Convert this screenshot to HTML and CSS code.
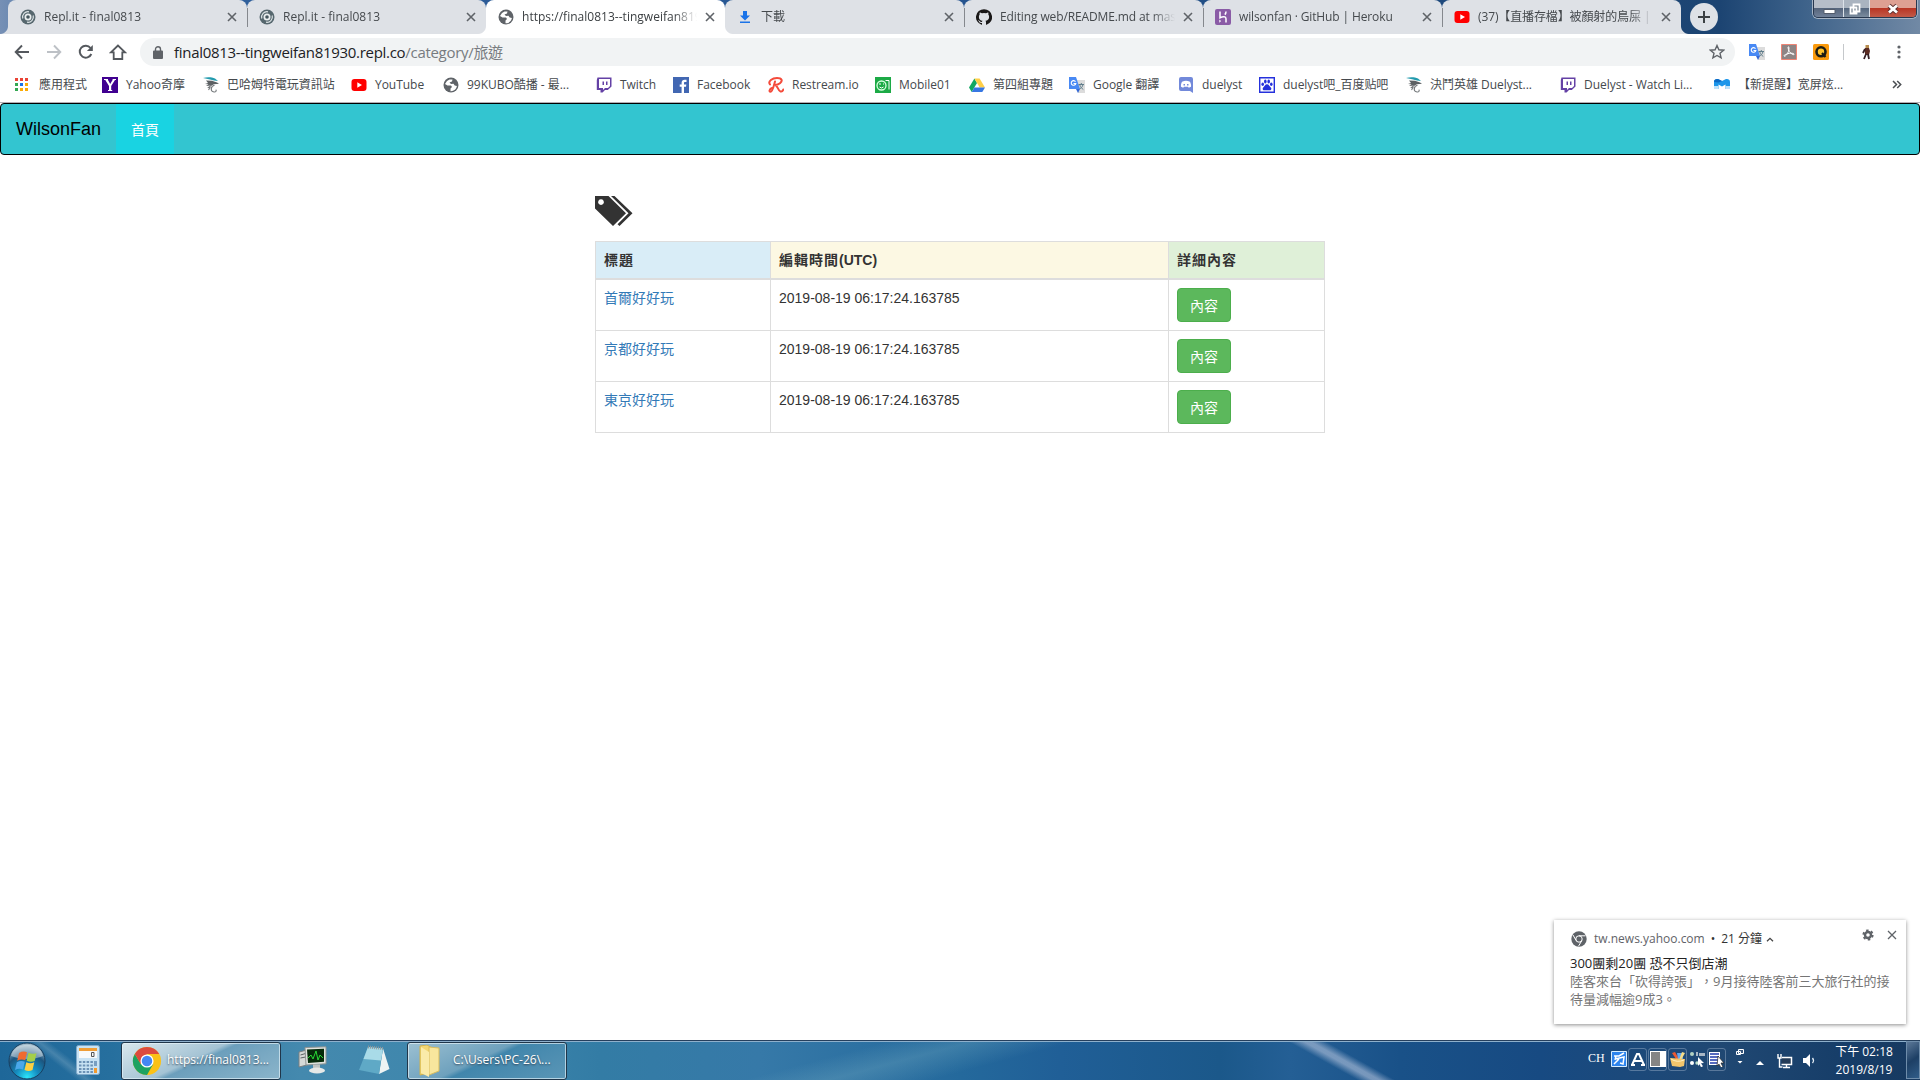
FILE: index.html
```html
<!DOCTYPE html>
<html lang="zh-TW">
<head>
<meta charset="utf-8">
<title>WilsonFan</title>
<link rel="stylesheet" href="styles.css">
</head>
<body>
<svg class="defs" width="0" height="0" aria-hidden="true">
  <symbol id="replit" viewBox="0 0 16 16"><circle cx="8" cy="8" r="7.500" fill="#56676e"/><path d="M2.800 9.500A5.400 5.400 0 0 1 9 2.800M13.200 6.500A5.400 5.400 0 0 1 7 13.200" fill="none" stroke="#dce3e5" stroke-width="1.200"/><circle cx="8" cy="8" r="3.500" fill="#e9edee"/><circle cx="8" cy="8" r="1.800" fill="#45565d"/></symbol>
  <symbol id="globe" viewBox="0 0 16 16"><circle cx="8" cy="8" r="7.500" fill="#5f6368"/><path d="M6.500 2.500L4 4 2 7l2.500 1.500L8 8.500l1 1.500-1.500 1.500v2.700c3 .3 6-2 6.400-5.200l-2.200-.4-1.200-1.800L8 7 6.500 5.500 9 4.500l.5-2z" fill="#fff"/></symbol>
  <symbol id="download" viewBox="0 0 16 16"><path d="M6 2h4v4.500h3L8 11.500 3 6.500h3zM3 12.500h10V14H3z" fill="#1a73e8"/></symbol>
  <symbol id="github" viewBox="0 0 16 16"><path d="M8 .2a8 8 0 0 0-2.500 15.600c.4.100.5-.2.500-.4v-1.500c-2.200.5-2.700-.9-2.700-.9-.4-.9-.9-1.200-.9-1.200-.7-.5.1-.5.100-.5.800.1 1.200.8 1.200.8.700 1.200 1.900.9 2.300.7.100-.5.300-.9.500-1.100-1.800-.2-3.600-.9-3.600-4 0-.9.300-1.600.8-2.100-.1-.2-.4-1 .1-2.100 0 0 .7-.2 2.200.8a7.600 7.600 0 0 1 4 0c1.500-1 2.200-.8 2.200-.8.400 1.100.1 1.900.1 2.100.5.600.8 1.300.8 2.100 0 3.100-1.900 3.800-3.700 4 .3.300.6.800.6 1.500v2.200c0 .2.100.5.600.4A8 8 0 0 0 8 .2z" fill="#191717"/></symbol>
  <symbol id="heroku" viewBox="0 0 16 16"><rect width="16" height="16" rx="2" fill="#8a5ba6"/><path d="M5 2.500v6.300c3-1.400 6-1.500 6 .9v3.800M11 2.500c0 1.300-.4 2.300-1.200 3.100" fill="none" stroke="#fff" stroke-width="1.500"/><path d="M4.300 10.500v3.200l1.800-1.600z" fill="#fff"/></symbol>
  <symbol id="youtube" viewBox="0 0 16 16"><rect x=".5" y="2" width="15" height="12" rx="3" fill="#f00"/><path d="M6.300 5.200v5.600L11 8z" fill="#fff"/></symbol>
  <symbol id="close" viewBox="0 0 10 10"><path d="M1 1l8 8M9 1L1 9" stroke="currentColor" stroke-width="1.600"/></symbol>
  <symbol id="apps" viewBox="0 0 16 16"><path d="M0 1h3v3H0zM5 1h3v3H5zM10 1h3v3h-3z" fill="#ea4335"/><path d="M0 6h3v3H0zM0 11h3v3H0z" fill="#34a853"/><path d="M5 6h3v3H5z" fill="#1a73e8"/><path d="M10 6h3v3h-3zM5 11h3v3H5zM10 11h3v3h-3z" fill="#fbab05"/></symbol>
  <symbol id="yahoo" viewBox="0 0 16 16"><path fill="#400090" d="M0 0h16v16H0z"/><path d="M2 2h4v1L8.200 7l2.400-4V2H14v1h-1L9.200 9v4h1v1H6v-1h1V9L3.300 3H2z" fill="#fff"/></symbol>
  <symbol id="bird" viewBox="0 0 16 16"><path d="M0 1C5-.3 9 .3 12 1.500l3 2.500-4-.5-5-1.200z" fill="#239bae"/><path d="M3 3.500l6 .3 5 1.700 2 1.300-5 .4-2.500 1.300L3 9l2.500-1.700L2 7l3-1z" fill="#5c6063"/><path d="M11.500 8.300c-4 1-4.500 6.200-.5 6.700 2 .2 2.800-1.500 1.700-2.200M8.500 8l-3 2.500 1.500.2-1.500 2.300" fill="none" stroke="#74787b" stroke-width="1.100"/></symbol>
  <symbol id="twitch" viewBox="0 0 16 16"><path d="M1.500.5h14v9L11.800 13H9l-2.500 2.500H4.500V13H.800V3z" fill="#6441a5"/><path d="M3 2h11v7l-2 2H9l-2 2v-2H3z" fill="#fff"/><path d="M6.500 4.500H8V8H6.500zM10 4.500h1.500V8H10z" fill="#6441a5"/></symbol>
  <symbol id="facebook" viewBox="0 0 16 16"><path fill="#4267b2" d="M0 0h16v16H0z"/><path d="M8.600 16V9.800H6.700V7.500h1.900V5.800c0-2 1.200-3.100 3-3.100.9 0 1.700.1 1.900.1V5h-1.300c-1 0-1.200.5-1.200 1.200v1.300h2.300l-.3 2.300h-2V16z" fill="#fff"/></symbol>
  <symbol id="restream" viewBox="0 0 16 16"><path d="M7 4.500C6 8 4.500 14.800 2.500 14.800c-1.800 0-1-3 1.500-3.800M2 7.500C-.5 4 4.500 1 9 1c5 0 6 2.800 3 5.200C10.500 7.400 8 7.900 7 7.900c2.500 0 3 6 5.500 6.600 1.500.3 2.500-.7 2.800-2" fill="none" stroke="#f44b3b" stroke-width="2" stroke-linecap="round"/></symbol>
  <symbol id="mobile" viewBox="0 0 16 16"><path fill="#1caa46" d="M0 0h16v16H0z"/><circle cx="6.500" cy="8.500" r="4.500" fill="none" stroke="#d7ffdf" stroke-width="1.300"/><path d="M4 7h2M8 7h1M4.500 10l2 1 2-1M10.500 3.500H14v9" fill="none" stroke="#fff"/></symbol>
  <symbol id="drive" viewBox="0 0 16 16"><path d="M5.400 1.500L0 10.500 2.700 15 8 6z" fill="#11a861"/><path d="M5.400 1.500h5.200l5.400 9h-5.300z" fill="#ffcf48"/><path d="M5.300 10.500H16L13.300 15H2.700z" fill="#3777e3"/></symbol>
  <symbol id="translate" viewBox="0 0 16 16"><path d="M6 3h10v13H9z" fill="#dcdcdc"/><path d="M0 0h7l4 12H0z" fill="#4889f4"/><path d="M7 12h4l-2 4z" fill="#3367d6"/><path d="M6.500 4.700A2.300 2.300 0 1 0 6.800 6.500H4.500" fill="none" stroke="#fff" stroke-width="1.100"/><path d="M9.500 7.500H15M12.300 6v1.500M14 7.500c-.5 2.500-2 4-3.500 4.500M10.800 8c.5 2 2 3.500 3.500 4.500" fill="none" stroke="#607d8b"/></symbol>
  <symbol id="discord" viewBox="0 0 16 16"><path d="M3 0h10a2 2 0 0 1 2 2v14l-3-2H3a2 2 0 0 1-2-2V2a2 2 0 0 1 2-2z" fill="#7289da"/><path d="M4 4.800c3-1.300 5-1.300 8 0 1 2 1.300 3.500 1 5l-2.200 1-.8-1H6l-.8 1L3 9.800c-.2-1.700.1-3.200 1-5z" fill="#fff"/><path d="M5.500 7h1.500v1.500H5.500zM9 7h1.500v1.500H9z" fill="#7289da"/></symbol>
  <symbol id="baidu" viewBox="0 0 16 16"><path fill="#fff" stroke="#2531dc" stroke-width="1.400" d="M.7.700h14.600v14.600H.7z"/><g fill="#2531dc"><ellipse cx="3.700" cy="7.300" rx="1.300" ry="1.800"/><ellipse cx="6.300" cy="4.500" rx="1.300" ry="1.900"/><ellipse cx="9.700" cy="4.500" rx="1.300" ry="1.900"/><ellipse cx="12.300" cy="7.300" rx="1.300" ry="1.800"/><path d="M8 7.200c2 0 2.300 2 4 3.500 1 1.500-.2 3-2 2.600H6c-1.800.4-3-1.100-2-2.600C5.700 9.200 6 7.200 8 7.200z"/></g></symbol>
  <symbol id="mm" viewBox="0 0 16 16"><path d="M0 5c0-3 3-3.500 5-2.500L8 4l3-1.500C13 1.500 16 2 16 5v7h-4.500V7.500L8 9.500l-3.500-2V12H0z" fill="#1c96ea"/><path d="M0 5c0-3 3-3.500 5-2.500L8 4 4.500 5.500z" fill="#0d69c4"/><path d="M0 9h4.500v3H0zM11.500 9H16v3h-4.500z" fill="#bfe2fa"/></symbol>
  <symbol id="chrome" viewBox="0 0 32 32"><circle cx="16" cy="16" r="15" fill="#fbc116"/><path d="M3 8.500A15 15 0 0 0 16 31l6.500-11.500L16 16 9.500 19.500z" fill="#1da261"/><path d="M3 8.500A15 15 0 0 1 29 8.500H16L9.500 19.500z" fill="#dd4b3e"/><circle cx="16" cy="16" r="7" fill="#fff"/><circle cx="16" cy="16" r="5.600" fill="#4587f3"/></symbol>
</svg>

<header class="browser">
  <div class="tabstrip">
    <div class="tab first"><svg class="ico"><use href="#replit"/></svg><span class="tab-title wide">Repl.it - final0813</span><svg class="x"><use href="#close"/></svg></div>
    <div class="tab before-active"><svg class="ico"><use href="#replit"/></svg><span class="tab-title wide">Repl.it - final0813</span><svg class="x"><use href="#close"/></svg></div>
    <div class="tab active"><svg class="ico"><use href="#globe"/></svg><span class="tab-title wide">https://final0813--tingweifan81930.repl.co</span><svg class="x"><use href="#close"/></svg></div>
    <div class="tab after-active"><svg class="ico"><use href="#download"/></svg><span class="tab-title">下載</span><svg class="x"><use href="#close"/></svg></div>
    <div class="tab"><svg class="ico"><use href="#github"/></svg><span class="tab-title">Editing web/README.md at master</span><svg class="x"><use href="#close"/></svg></div>
    <div class="tab"><svg class="ico"><use href="#heroku"/></svg><span class="tab-title">wilsonfan · GitHub | Heroku</span><svg class="x"><use href="#close"/></svg></div>
    <div class="tab last"><svg class="ico"><use href="#youtube"/></svg><span class="tab-title">(37)【直播存檔】被顏射的鳥屎 |</span><svg class="x"><use href="#close"/></svg></div>
    <div class="newtab"><svg width="14" height="14" viewBox="0 0 14 14"><path d="M7 1v12M1 7h12" stroke="#3c4043" stroke-width="2"/></svg></div>
    <div class="winctl">
      <span class="min"><svg width="14" height="14"><path d="M2 7.500h11v4H2z" fill="#fff" stroke="#535c6c"/></svg></span>
      <span class="max"><svg width="14" height="14"><path d="M5.500 2.500h6v7h-6zM2.500 5.500h6v6h-6z" fill="#76828f" stroke="#fff" stroke-width="1.800"/></svg></span>
      <span class="cls"><svg width="14" height="14"><path d="M3 3.500l8 7M11 3.500l-8 7" stroke="#5b3030" stroke-width="4.500"/><path d="M3 3.500l8 7M11 3.500l-8 7" stroke="#fff" stroke-width="2.800"/></svg></span>
    </div>
  </div>

  <div class="toolbar">
    <div class="nav-icons">
      <svg width="16" height="16" viewBox="0 0 16 16"><path d="M15 8H2M8 1.500L1.700 8 8 14.500" fill="none" stroke="#54585d" stroke-width="1.900"/></svg>
      <svg width="16" height="16" viewBox="0 0 16 16"><path d="M1 8h13M8 1.500L14.300 8 8 14.500" fill="none" stroke="#bdc1c6" stroke-width="1.900"/></svg>
      <svg width="16" height="16" viewBox="0 0 16 16"><path d="M13.300 10A6 6 0 1 1 12.500 4" fill="none" stroke="#54585d" stroke-width="2"/><path d="M14.800 1v6H8.900z" fill="#54585d"/></svg>
      <svg class="house" width="18" height="16" viewBox="0 0 18 16"><path d="M9 1.500L2 8.300h2.700V15h8.600V8.300H16z" fill="none" stroke="#54585d" stroke-width="1.800"/></svg>
    </div>
    <div class="omnibox">
      <svg width="10" height="13" viewBox="0 0 10 13"><path d="M1 4.500h8a1 1 0 0 1 1 1V12a1 1 0 0 1-1 1H1a1 1 0 0 1-1-1V5.500a1 1 0 0 1 1-1z" fill="#5f6368"/><path d="M2.500 5V3.200a2.500 2.500 0 0 1 5 0V5" fill="none" stroke="#5f6368" stroke-width="1.400"/></svg>
      <span class="url">final0813--tingweifan81930.repl.co<span class="path">/category/旅遊</span></span>
      <svg width="16" height="16" viewBox="0 0 16 16"><path d="M8 1.500l1.900 4.300 4.700.4-3.600 3.100 1.100 4.600L8 11.500l-4.100 2.400L5 9.300 1.400 6.200l4.700-.4z" fill="none" stroke="#5f6368" stroke-width="1.400"/></svg>
    </div>
    <div class="exts">
      <svg class="ico"><use href="#translate"/></svg>
      <svg class="ico" viewBox="0 0 16 16"><path d="M.5.500h15v15H.5z" fill="#8e8585" stroke="#ee8474"/><path d="M7.500 2.500c1 1 .3 5-1 7-1 1.800-3 3.500-3.500 2.500s4-3 7.500-2.800 3 2 1.500 1.300C9 9.500 7 6 7 3" fill="none" stroke="#fff"/></svg>
      <svg class="ico" viewBox="0 0 16 16"><rect width="16" height="16" rx="1.500" fill="#fa9a0c"/><circle cx="8" cy="7.800" r="4.500" fill="#ffc22b" stroke="#1c1c14" stroke-width="2.600"/><path d="M9 9l3.500 4" stroke="#1c1c14" stroke-width="2.200"/></svg>
      <i class="sep"></i>
      <svg class="ico fig" viewBox="0 0 16 16"><path d="M7.500 1h3.500v3.500H7.500z" fill="#b68b4d"/><path d="M7 4h4l1 3-1 4H7z" fill="#5b2b22"/><path d="M7 5L5 9M8 10l-2 5M10 10l1 5" stroke="#352025" stroke-width="1.800"/></svg>
      <svg width="4" height="14"><circle cx="2" cy="2" r="1.600" fill="#5f6368"/><circle cx="2" cy="7" r="1.600" fill="#5f6368"/><circle cx="2" cy="12" r="1.600" fill="#5f6368"/></svg>
    </div>
  </div>

  <nav class="bookmarks">
    <a><svg class="ico"><use href="#apps"/></svg>應用程式</a>
    <a><svg class="ico"><use href="#yahoo"/></svg>Yahoo奇摩</a>
    <a><svg class="ico"><use href="#bird"/></svg>巴哈姆特電玩資訊站</a>
    <a><svg class="ico"><use href="#youtube"/></svg>YouTube</a>
    <a><svg class="ico"><use href="#globe"/></svg>99KUBO酷播 - 最...</a>
    <a><svg class="ico"><use href="#twitch"/></svg>Twitch</a>
    <a><svg class="ico"><use href="#facebook"/></svg>Facebook</a>
    <a><svg class="ico"><use href="#restream"/></svg>Restream.io</a>
    <a><svg class="ico"><use href="#mobile"/></svg>Mobile01</a>
    <a><svg class="ico"><use href="#drive"/></svg>第四組專題</a>
    <a><svg class="ico"><use href="#translate"/></svg>Google 翻譯</a>
    <a><svg class="ico"><use href="#discord"/></svg>duelyst</a>
    <a><svg class="ico"><use href="#baidu"/></svg>duelyst吧_百度贴吧</a>
    <a><svg class="ico"><use href="#bird"/></svg>決鬥英雄 Duelyst...</a>
    <a><svg class="ico"><use href="#twitch"/></svg>Duelyst - Watch Li...</a>
    <a><svg class="ico"><use href="#mm"/></svg>【新提醒】宽屏炫...</a>
    <svg width="10" height="9" viewBox="0 0 10 9"><path d="M1 1l3.500 3.500L1 8M5.200 1l3.500 3.500L5.200 8" fill="none" stroke="#4a4e52" stroke-width="1.500"/></svg>
  </nav>
</header>

<main class="page">
  <nav class="navbar"><a class="brand">WilsonFan</a><a class="home">首頁</a></nav>
  <section class="content">
    <svg class="tags" width="38" height="30" viewBox="0 0 38 30"><path fill-rule="evenodd" d="M0 0h13.500L31 17.200 18 30 0 12.500zM6 3.200a2.900 2.900 0 1 0 .01 0z" fill="#333"/><path d="M16 0h3.500L37.500 17.200 24.500 30l-2-1.800L33.500 17.200z" fill="#333"/></svg>
    <table class="posts">
      <thead><tr><th class="info"><span>標題</span></th><th class="warning"><span>編輯時間</span>(UTC)</th><th class="success"><span>詳細內容</span></th></tr></thead>
      <tbody>
        <tr><td><a>首爾好好玩</a></td><td>2019-08-19 06:17:24.163785</td><td><button class="btn">內容</button></td></tr>
        <tr><td><a>京都好好玩</a></td><td>2019-08-19 06:17:24.163785</td><td><button class="btn">內容</button></td></tr>
        <tr><td><a>東京好好玩</a></td><td>2019-08-19 06:17:24.163785</td><td><button class="btn">內容</button></td></tr>
      </tbody>
    </table>
  </section>
</main>

<aside class="toast">
  <div class="toast-head">
    <svg width="16" height="16" viewBox="0 0 16 16"><circle cx="8" cy="8" r="7.700" fill="#5f6368"/><circle cx="8" cy="8" r="3.200" fill="none" stroke="#fff"/><path d="M8 4.800h6.500M5.200 9.600L2 4M10.800 9.600L7.500 15.200" stroke="#fff"/></svg>
    <span class="origin">tw.news.yahoo.com</span><span class="dot">•</span><span class="ago">21 分鐘</span>
    <svg class="chev" width="8" height="5" viewBox="0 0 8 5"><path d="M1 4.300l3-3 3 3" fill="none" stroke="#444" stroke-width="1.300"/></svg>
    <svg class="gear" width="12" height="12" viewBox="0 0 12 12"><circle cx="6" cy="6" r="3" fill="none" stroke="#5f6368" stroke-width="2.400"/><circle cx="6" cy="6" r="4.700" fill="none" stroke="#5f6368" stroke-width="1.800" stroke-dasharray="2.460 2.460"/></svg>
    <svg class="dismiss" width="10" height="10" viewBox="0 0 10 10"><path d="M1 1l8 8M9 1L1 9" stroke="#5f6368" stroke-width="1.300"/></svg>
  </div>
  <div class="toast-title">300團剩20團 恐不只倒店潮</div>
  <div class="toast-body">陸客來台「砍得誇張」，9月接待陸客前三大旅行社的接<br>待量減幅逾9成3。</div>
</aside>

<footer class="taskbar">
  <svg class="orb" width="38" height="38" viewBox="0 0 38 38"><defs><radialGradient id="og" cx=".5" cy=".95" r=".9"><stop offset="0" stop-color="#2ce6fb"/><stop offset=".35" stop-color="#158dc0"/><stop offset=".7" stop-color="#1c557f"/><stop offset="1" stop-color="#9fb9c9"/></radialGradient></defs><circle cx="19" cy="19" r="18" fill="url(#og)" stroke="#183f60"/><path d="M3 14C6-1 32-1 35 14c-9 4-22 4-32 0z" fill="#fff" opacity=".4"/><path d="M11 11q4-2.500 8-.8l-1.800 8q-4-1.700-8 .5z" fill="#ef6a31"/><path d="M20.500 10.800q4 2 8 .1l-1.800 8q-4 1.700-8-.2z" fill="#a4cf4a"/><path d="M8.800 20.200q4-2.200 8-.5L15 27.500q-4-1.700-8 .5z" fill="#4aa8ea"/><path d="M18.300 20.300q4 1.900 8 0l-1.800 7.800q-4 2-8-.1z" fill="#fbd042"/></svg>
  <svg class="calc" width="24" height="30" viewBox="0 0 24 30"><rect x=".5" y=".5" width="23" height="29" rx="2" fill="#c8e2f3" stroke="#7fa9ca"/><path d="M3 3h18v3H3z" fill="#ef9d36"/><path d="M3 6h18v7H3z" fill="#f7f9fa"/><path d="M15.500 7.500h2.500v4h-2.500z" fill="none" stroke="#555"/><path d="M3 17h15M3 20.500h15M3 24h15M3 27h15" stroke="#6c92b6" stroke-width="2" stroke-dasharray="2.500 1.300"/><path d="M18 16h3v5h-3z" fill="#799fc2"/><path d="M18 23h3v5h-3z" fill="#f39a2e"/></svg>
  <div class="task current"><svg width="30" height="30"><use href="#chrome"/></svg><span>https://final0813...</span></div>
  <svg class="monitor" width="30" height="28" viewBox="0 0 30 28"><path d="M1 6l8-2v15l-8 2z" fill="#d5d9d7" stroke="#797f80"/><path d="M2.500 9l5-1.500M2.500 12l5-1" stroke="#5a6264"/><path d="M7 1.500L28 .8v17L8 19z" fill="#e0e3df" stroke="#8d9392"/><path d="M9 3.500l17-.7v13L10 17z" fill="#062b0b"/><path d="M10 12l3-3 2 4 3-8 2 9 2-5 3 3" fill="none" stroke="#27d934"/><path d="M15 18.500h7v4h-7z" fill="#bec3c2"/><ellipse cx="19" cy="24.500" rx="8" ry="3" fill="#e6e8e7"/></svg>
  <svg class="notepad" width="31" height="30" viewBox="0 0 31 30"><path d="M24 3.500L30.500 24 20 29z" fill="#edf3f3"/><path d="M9 2l15 1.500L20 29 0 25z" fill="#5fa9c6"/><path d="M9 2l15 1.500-2 12L4.500 14z" fill="#a9dbe8"/><path d="M9 2l15 1.500" stroke="#8d9a9e" stroke-width="3" stroke-dasharray="1 1"/></svg>
  <div class="task folder"><svg width="30" height="32" viewBox="0 0 30 32"><path d="M4 1l7-1 5 3v24L4 30z" fill="#f1d673" stroke="#d2b34d"/><path d="M13 2l10 1v23l-10 4z" fill="#f8e69d" stroke="#d8bc5f"/><path d="M5 2l8 5v25l-8-4z" fill="#faeba9"/></svg><span>C:\Users\PC-26\...</span></div>

  <div class="tray">
    <span class="ch">CH</span>
    <svg width="16" height="16" viewBox="0 0 16 16"><path fill="#2d84ed" stroke="#d9efff" d="M.5.500h15v15H.5z"/><path d="M3 5h5l5-3M4 8l9-2-1 7-3-1M5 5L4 9M8 8l-5 5" fill="none" stroke="#fff" stroke-width="1.500"/></svg>
    <span class="key"><svg width="16" height="16"><path d="M2 14L7 3h2l5 11M4.500 10h7M1 14h4M11 14h4" fill="none" stroke="#fff" stroke-width="2"/></svg></span>
    <span class="key"><svg width="16" height="16"><path fill="#fff" d="M0 0h16v16H0z"/><path fill="#858585" d="M1 1h9v14H1z"/></svg></span>
    <span class="key"><svg width="16" height="16"><path d="M2 2l3-1 4 7H6z" fill="#ec5a32"/><path d="M7 2h6v6H8z" fill="#62a8ef"/><path d="M12 1l3 1-4 7H9z" fill="#f6dc86"/><path d="M0 7l15 1-1 7-4 1-8-1z" fill="#f3c66c"/><path d="M1 8q6 4 13 1" fill="none" stroke="#fff3c5"/></svg></span>
    <svg class="pad" width="16" height="16"><circle cx="3" cy="3" r="2" fill="#b4d2c2"/><circle cx="3" cy="12" r="2" fill="#fff"/><circle cx="8" cy="12" r="1.700" fill="#bde0ca"/><path d="M7 1h2v4H7zM10 2h6v3h-6z" fill="#a9b7c5"/><path d="M9 6l6 6-3 .2 2 3-2 1-1.500-3L9 15z" fill="#fff"/></svg>
    <span class="key"><svg width="16" height="16"><path fill="#fff" d="M0 1h11v13H0z"/><path d="M1 3h9M1 6h9M1 9h9M1 12h9" stroke="#1f3bab" stroke-width="1.500"/><path d="M9 5l6 7h-3l2 4-2 1-2-4-2 2z" fill="#fff" stroke="#222" stroke-width=".7"/></svg></span>
    <svg class="restore" width="10" height="18"><path d="M3.500 1.500h5v4h-5zM1.500 3.500h4v3h-4z" fill="#38567c" stroke="#fff"/><path d="M2.500 13h5L5 15.500z" fill="#fff"/></svg>
    <svg class="up" width="8" height="5"><path d="M0 5l4-4 4 4z" fill="#fff"/></svg>
    <svg class="net" width="16" height="16"><path d="M5 4.500h9.500v7H4.500" fill="#253c58" stroke="#fff" stroke-width="1.500"/><path d="M1 1v4h3V1M2.500 5v9h3M9.500 12v3M6 14.500h7" fill="none" stroke="#fff" stroke-width="1.400"/></svg>
    <svg class="vol" width="14" height="16"><path d="M0 5h3l4-4v13l-4-4H0z" fill="#fff"/><path d="M9.500 5q2 2.500 0 5" fill="none" stroke="#e3edf6" stroke-width="1.300"/></svg>
    <div class="clock">下午 02:18<br>2019/8/19</div>
    <i class="peek"></i>
  </div>
</footer>
</body>
</html>
```

FILE: styles.css
```css
* { box-sizing: border-box; }

body {
  margin: 0;
  width: 1920px;
  height: 1080px;
  overflow: hidden;
  display: flex;
  flex-direction: column;
  background: #fff;
  font-family: "Liberation Sans", "Noto Sans CJK TC", sans-serif;
  font-size: 14px;
  line-height: 20px;
  color: #333;
  text-spacing-trim: space-all;
}

svg { display: block; flex: none; }
.defs { position: absolute; }
.ico { width: 16px; height: 16px; }

.browser,
.toast,
.taskbar { font-family: "Open Sans", "Noto Sans CJK TC", sans-serif; }

/* Tab strip */
.tabstrip {
  display: flex;
  height: 34px;
  padding-left: 8px;
  background: linear-gradient(90deg, #7690b5 0, #6585b0 20px, #2f5f9b 240px, #265591 900px, #1f4a7e 1400px, #1c4472 1720px, #3c6189 1800px, #7189a5 1920px);
}
.tab {
  position: relative;
  display: flex;
  align-items: center;
  width: 239px;
  height: 34px;
  padding: 0 10px 0 12px;
  border-radius: 8px 8px 0 0;
  background: #dee1e6;
  color: #45494d;
  font-size: 12px;
  letter-spacing: -.12px;
}
.tab + .tab:not(.active):not(.after-active)::before {
  content: "";
  position: absolute;
  left: 0;
  top: 8px;
  width: 1px;
  height: 19px;
  background: #85888d;
}
.tab.active { background: #fff; color: #3c4043; }
.before-active { background: radial-gradient(circle at 0 0, #dee1e6 7.500px, #fff 8.500px) right bottom / 8px 8px no-repeat, #dee1e6; }
.after-active { background: radial-gradient(circle at 100% 0, #dee1e6 7.500px, #fff 8.500px) left bottom / 8px 8px no-repeat, #dee1e6; }
/* outward feet at both ends of the strip */
.first::after,
.last::after {
  content: "";
  position: absolute;
  bottom: 0;
  width: 8px;
  height: 8px;
}
.first::after { left: -8px; background: radial-gradient(circle at 0 0, transparent 7.500px, #dee1e6 8.500px); }
.last::after { right: -8px; background: radial-gradient(circle at 100% 0, transparent 7.500px, #dee1e6 8.500px); }
.tab-title {
  width: 175px;
  margin-left: 8px;
  overflow: hidden;
  white-space: nowrap;
  -webkit-mask-image: linear-gradient(90deg, #000 152px, transparent 175px);
  mask-image: linear-gradient(90deg, #000 152px, transparent 175px);
}
.wide { letter-spacing: .02px; }
.x { width: 10px; height: 10px; margin-left: 8px; color: #5f6368; }
.newtab {
  display: flex;
  align-items: center;
  justify-content: center;
  width: 28px;
  height: 28px;
  margin: 3px 0 0 9px;
  border-radius: 50%;
  background: #dee1e6;
}
.winctl {
  display: flex;
  width: 104px;
  height: 18px;
  margin-left: 95px;
  border: 1px solid #28384f;
  border-top: 0;
  border-radius: 0 0 5px 5px;
  box-shadow: 0 0 0 1px #a6b4c5;
  overflow: hidden;
}
.winctl span { display: flex; align-items: center; justify-content: center; }
.min { width: 29px; background: linear-gradient(#b6bdc8 50%, #56657c 50%, #718199); }
.winctl .max { width: 26px; padding-right: 3px; border-left: 1px solid #dce2e9; background: linear-gradient(#aab4c0 50%, #56687f 50%, #7b8c9e); }
.cls { flex: 1; border-left: 1px solid #dce2e9; background: linear-gradient(#dea093 50%, #b93625 50%, #c25a48); }

/* Address row */
.toolbar { display: flex; align-items: center; height: 36px; background: #fff; }
.nav-icons { display: flex; gap: 16px; width: 140px; padding-left: 14px; }
.house { margin-left: -1px; }
.omnibox {
  display: flex;
  align-items: center;
  width: 1595px;
  height: 28px;
  padding: 0 10px 0 13px;
  border-radius: 14px;
  background: #f1f3f4;
}
.url { flex: 1; margin-left: 11px; font-size: 15px; letter-spacing: -.3px; color: #202124; }
.path { color: #777b80; }
.exts { display: flex; align-items: center; flex: 1; padding-left: 14px; }
.exts .ico + .ico { margin-left: 16px; }
.sep { width: 1px; height: 16px; margin: 0 14px 0 14px; background: #c5c8cb; }
.exts .fig { margin-right: 23px; }

/* Bookmarks */
.bookmarks {
  display: grid;
  grid-template-columns: 87px 101px 148px 92px 153px 77px 95px 107px 94px 100px 109px 81px 147px 154px 154px 178px 10px;
  align-items: center;
  height: 33px;
  padding: 0 0 3px 15px;
  border-bottom: 1px solid #b3aeb5;
  background: #fff;
  color: #45494d;
  font-size: 12px;
  letter-spacing: -.03px;
}
.bookmarks a { display: flex; align-items: center; gap: 8px; white-space: nowrap; }

/* Site */
.page { flex: 1; }
.navbar {
  display: flex;
  align-items: stretch;
  height: 52px;
  border: 1px solid #000;
  border-radius: 4px;
  background: #33c5d0;
}
.brand { padding: 15px; font-size: 18px; line-height: 20px; color: #000; }
.home { padding: 15px; line-height: 22px; color: #fff; background: #19d3e2; }
.content { width: 730px; margin: 41px auto 0; }
.posts { width: 730px; margin-top: 15px; border-collapse: collapse; table-layout: fixed; }
.posts th,
.posts td { padding: 8px; border: 1px solid #ddd; vertical-align: top; text-align: left; }
.posts th { border-bottom-width: 2px; }
.posts th span { letter-spacing: 1px; }
.posts a { color: #337ab7; }
.info { width: 175px; background: #d9edf7; }
.warning { width: 398px; background: #fcf8e3; }
.success { background: #dff0d8; }
.btn {
  display: block;
  height: 34px;
  padding: 7px 12px 5px;
  border: 1px solid #4cae4c;
  border-radius: 4px;
  background: #5cb85c;
  color: #fff;
  font: 14px/20px "Liberation Sans", "Noto Sans CJK TC", sans-serif;
}

/* Notification */
.toast {
  position: absolute;
  left: 1554px;
  top: 920px;
  width: 352px;
  height: 104px;
  padding: 9px 16px 9px 17px;
  background: #fff;
  box-shadow: 0 1px 4px rgba(0, 0, 0, .45);
  font-size: 13px;
  line-height: 18px;
}
.toast-head { display: flex; align-items: center; height: 20px; font-size: 12px; }
.origin { margin-left: 7px; color: #5f6368; }
.dot { margin: 0 6px; }
.ago { color: #333; }
.chev { margin-left: 4px; }
.gear { margin: -9px 0 0 auto; }
.dismiss { margin: -9px -7px 0 13px; }
.toast-title { margin: 5px 0 0 -1px; color: #222; white-space: nowrap; }
.toast-body { margin-left: -1px; color: #757575; white-space: nowrap; }

/* Taskbar */
.taskbar {
  display: flex;
  align-items: center;
  height: 40px;
  border-top: 1px solid #26405e;
  box-shadow: inset 0 1px 0 #8eb0cc;
  background:
    linear-gradient(38deg, transparent 0 43%, rgba(180, 205, 220, .25) 49%, transparent 55%) 0 0 / 130px 40px no-repeat,
    linear-gradient(345deg, transparent 32%, rgba(120, 175, 195, .3) 50%, transparent 65%) 690px 0 / 420px 40px no-repeat,
    linear-gradient(209deg, transparent 41%, rgba(180, 195, 220, .6) 48%, rgba(180, 195, 220, .6) 51%, transparent 58%) 1266px 0 / 150px 40px no-repeat,
    linear-gradient(90deg, #1e6799 0, #266f9e 110px, #4489ae 300px, #3d86ac 480px, #337ca5 600px, #3679a8 760px, #24699c 960px, #205f97 1060px, #1b588a 1220px, #245f95 1290px, #195188 1400px, #174a82 1540px, #204873 1720px, #163d68 1850px, #18395f 1920px);
  color: #fff;
  font-size: 12px;
}
.orb { margin-left: 8px; }
.calc { margin: 0 0 2px 30px; }
.task {
  display: flex;
  align-items: center;
  width: 160px;
  height: 38px;
  border: 1px solid #20364a;
  border-radius: 3px;
  box-shadow: inset 0 0 0 1px rgba(230, 245, 250, .65);
  white-space: nowrap;
}
.task span { padding-bottom: 1px; text-shadow: 0 1px 2px #345; }
.current { margin-left: 21px; padding-left: 10px; gap: 5px; background: linear-gradient(155deg, #d9e7ed 0, #a4c3d4 45%, #6c9fbc 50%, #8bb5cb 100%); }
.monitor { margin: 0 0 2px 17px; }
.notepad { margin: 0 0 1px 31px; }
.folder { margin-left: 17px; padding-left: 8px; gap: 7px; background: linear-gradient(155deg, #9cc0d2 0, #6ea1bd 45%, #4186ac 50%, #5b96b6 100%); }
.tray { display: flex; align-items: center; height: 100%; margin-left: auto; padding-bottom: 3px; }
.ch { width: 23px; margin-top: -2px; font-family: "Liberation Serif", serif; font-size: 12px; }
.key {
  display: flex;
  align-items: center;
  justify-content: center;
  width: 19px;
  height: 23px;
  margin-left: 1px;
  border: 1px solid rgba(160, 180, 205, .45);
  border-radius: 3px;
}
.pad { margin: 0 1px 0 2px; }
.restore { margin: -4px 0 0 9px; }
.up { margin: 6px 0 0 11px; }
.net { margin: 4px 0 0 13px; }
.vol { margin: 4px 5px 0 10px; }
.clock { width: 84px; padding-top: 4px; text-align: center; line-height: 18px; }
.peek {
  width: 14px;
  height: 38px;
  margin-top: 2px;
  border: 1px solid #6f8dab;
  background: linear-gradient(145deg, #5c7898, #1d3f65 50%, #315d89);
}
```
